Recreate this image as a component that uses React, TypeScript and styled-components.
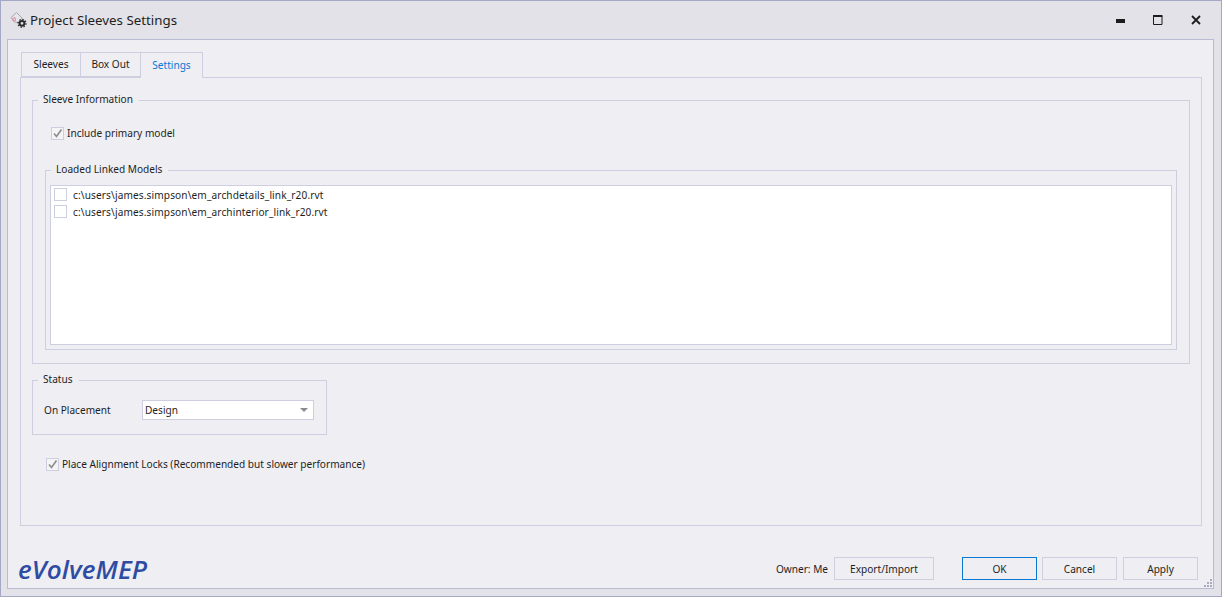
import React from 'react';
import styled, { createGlobalStyle } from 'styled-components';

const GlobalStyle = createGlobalStyle`
  html, body { margin: 0; padding: 0; }
  body { background: #e2e2e8; font-family: "Noto Sans", "DejaVu Sans", sans-serif; font-size: 10.1px; color: #1e1e1e; }
`;

const Window = styled.div`
  width: 1222px;
  height: 597px;
  box-sizing: border-box;
  border: 1px solid #a5a8c5;
  background: #e2e2e8;
  display: flex;
  flex-direction: column;
  overflow: hidden;
`;

const TitleBar = styled.div`
  height: 38px;
  flex: none;
  display: flex;
  align-items: center;
  padding: 0 6px 0 9px;
`;

const TitleText = styled.span`
  font-size: 13.3px;
  margin-left: 2px;
  flex: 1;
`;

const WinButton = styled.div`
  width: 38px;
  height: 38px;
  display: flex;
  align-items: center;
  justify-content: center;
  margin-top: -1px;
`;

const Body = styled.div`
  flex: 1;
  margin: 0 7px 7px 6px;
  border: 1px solid #b9bbd2;
  background: #eeeef3;
  padding: 12px 11px 0 12px;
  display: flex;
  flex-direction: column;
  position: relative;
`;

const TabRow = styled.div`
  display: flex;
  padding-left: 1px;
  height: 26px;
  position: relative;
  z-index: 1;
`;

const Tab = styled.div<{ $w: number; $active?: boolean }>`
  width: ${p => p.$w}px;
  height: 25px;
  box-sizing: border-box;
  padding-bottom: 2px;
  display: flex;
  align-items: center;
  justify-content: center;
  border: 1px solid #cdcfe0;
  margin-right: -1px;
  background: #eeeef3;
  color: ${p => (p.$active ? '#0a78d2' : '#1e1e1e')};
  ${p => p.$active && 'height: 26px; border-bottom: none;'}
`;

const TabPage = styled.div`
  height: 449px;
  margin-top: -1px;
  box-sizing: border-box;
  border: 1px solid #cdcfe0;
  padding: 14px 11px 0 11px;
`;

const Group = styled.fieldset<{ $w?: number; $h: number }>`
  margin: 0;
  padding: 0;
  border: 1px solid #cdcfe0;
  box-sizing: border-box;
  width: ${p => (p.$w ? `${p.$w}px` : 'auto')};
  height: ${p => p.$h}px;
`;

const Legend = styled.legend`
  margin-left: 5px;
  padding: 0 6px 2px 5px;
  line-height: 14px;
`;

const LinkedLegend = styled(Legend)`
  margin-left: 1px;
`;

const CheckRow = styled.div<{ $left: number; $top: number }>`
  display: flex;
  align-items: center;
  gap: 3px;
  margin-left: ${p => p.$left}px;
  margin-top: ${p => p.$top}px;
  height: 14px;
`;

const Box = styled.span`
  width: 13px;
  height: 13px;
  box-sizing: border-box;
  border: 1px solid #cdcfe0;
  background: #f4f4f7;
  display: inline-flex;
  align-items: center;
  justify-content: center;
`;

const ListBox = styled(Box)`
  background: #fff;
`;

const LinkedGroup = styled(Group)`
  margin: 22px 12px 0 12px;
  padding: 0 4px;
`;

const ModelList = styled.div`
  height: 160px;
  margin-top: 7px;
  background: #fff;
  border: 1px solid #cdcfe0;
  padding: 0 0 0 3px;
  box-sizing: border-box;
`;

const ModelRow = styled.div`
  height: 17px;
  display: flex;
  align-items: center;
  gap: 6px;
  letter-spacing: 0.12px;
`;

const StatusGroup = styled(Group)`
  margin-top: 8px;
`;

const StatusRow = styled.div`
  display: flex;
  align-items: center;
  margin-top: 12px;
  padding-left: 11px;
`;

const FieldLabel = styled.span`
  width: 98px;
`;

const Combo = styled.div`
  width: 172px;
  height: 20px;
  box-sizing: border-box;
  border: 1px solid #cdcfe0;
  background: #fff;
  display: flex;
  align-items: center;
  justify-content: space-between;
  padding: 0 5px 0 2px;
`;

const Caret = styled.span`
  width: 0;
  height: 0;
  border-left: 4px solid transparent;
  border-right: 4px solid transparent;
  border-top: 4px solid #8a8a92;
`;

const Footer = styled.div`
  display: flex;
  align-items: center;
  margin-top: 31px;
  padding-right: 4px;
  height: 23px;
`;

const Logo = styled.div`
  font-family: "Open Sans", sans-serif;
  font-style: italic;
  font-weight: 600;
  font-size: 26px;
  letter-spacing: 0.1px;
  color: #2f4ca3;
  margin-right: auto;
  margin-left: -2px;
`;

const Owner = styled.span`
  margin-right: 1px;
`;

const Button = styled.div<{ $w: number; $primary?: boolean }>`
  width: ${p => p.$w}px;
  height: 23px;
  box-sizing: border-box;
  display: flex;
  align-items: center;
  justify-content: center;
  border: 1px solid ${p => (p.$primary ? '#0a78d2' : '#cdcfe0')};
  margin-left: 5px;
  &:last-child {
    margin-left: 6px;
  }
`;

const Spacer = styled.span`
  width: 23px;
`;

const Grip = styled.svg`
  position: absolute;
  right: 0;
  bottom: 0;
`;

const Tick = () => (
  <svg width="11" height="11" viewBox="0 0 11 11">
    <path d="M2 5.5 L4.5 8.5 L9.5 1.5" fill="none" stroke="#8c8c8c" strokeWidth="1.6" />
  </svg>
);

const AppIcon = () => (
  <svg width="18" height="18" viewBox="0 0 18 18">
    <path d="M1 6.5 L6.5 1.5 L12 7 L9 12 L4.5 11 Z" fill="#e6e6ea" stroke="#a8a8ae" />
    <path d="M2.5 7.5 L5 6.5 L5.5 9.5 L3.5 10 Z" fill="none" stroke="#d98a96" />
    <circle cx="12" cy="12.3" r="2.4" fill="none" stroke="#2c2c2c" strokeWidth="2" />
    <circle cx="12" cy="12.3" r="4" fill="none" stroke="#2c2c2c" strokeWidth="1.2" strokeDasharray="1.5 1.6" />
  </svg>
);

const models = [
  'c:\\users\\james.simpson\\em_archdetails_link_r20.rvt',
  'c:\\users\\james.simpson\\em_archinterior_link_r20.rvt',
];

export default function App() {
  return (
    <Window>
      <GlobalStyle />
      <TitleBar>
        <AppIcon />
        <TitleText>Project Sleeves Settings</TitleText>
        <WinButton>
          <svg width="10" height="10" viewBox="0 0 10 10"><rect x="1" y="4" width="9" height="4" fill="#1c1c1c" /></svg>
        </WinButton>
        <WinButton>
          <svg width="10" height="10" viewBox="0 0 10 10"><path d="M.5 1.5h8.5v8h-8.5z" fill="none" stroke="#1c1c1c" /><rect x="0" y="0" width="9.5" height="2" fill="#1c1c1c" /></svg>
        </WinButton>
        <WinButton>
          <svg width="10" height="10" viewBox="0 0 10 10"><path d="M1 1l8 8M9 1l-8 8" stroke="#1c1c1c" strokeWidth="1.8" /></svg>
        </WinButton>
      </TitleBar>
      <Body>
        <TabRow>
          <Tab $w={60}>Sleeves</Tab>
          <Tab $w={61}>Box Out</Tab>
          <Tab $w={63} $active>Settings</Tab>
        </TabRow>
        <TabPage>
          <Group $h={272}>
            <Legend>Sleeve Information</Legend>
            <CheckRow $left={18} $top={18}>
              <Box><Tick /></Box>
              Include primary model
            </CheckRow>
            <LinkedGroup $h={188}>
              <LinkedLegend>Loaded Linked Models</LinkedLegend>
              <ModelList>
                {models.map(m => (
                  <ModelRow key={m}>
                    <ListBox />
                    {m}
                  </ModelRow>
                ))}
              </ModelList>
            </LinkedGroup>
          </Group>
          <StatusGroup $w={295} $h={63}>
            <Legend>Status</Legend>
            <StatusRow>
              <FieldLabel>On Placement</FieldLabel>
              <Combo>Design<Caret /></Combo>
            </StatusRow>
          </StatusGroup>
          <CheckRow $left={14} $top={22}>
            <Box><Tick /></Box>
            Place Alignment Locks (Recommended but slower performance)
          </CheckRow>
        </TabPage>
        <Footer>
          <Logo>eVolveMEP</Logo>
          <Owner>Owner: Me</Owner>
          <Button $w={100}>Export/Import</Button>
          <Spacer />
          <Button $w={75} $primary>OK</Button>
          <Button $w={75}>Cancel</Button>
          <Button $w={75}>Apply</Button>
        </Footer>
        <Grip width="10" height="10" viewBox="0 0 10 10">
          <path d="M7 1h2v2h-2zM4 4h2v2h-2zM7 4h2v2h-2zM1 7h2v2h-2zM4 7h2v2h-2zM7 7h2v2h-2z" fill="#a9abbe" />
        </Grip>
      </Body>
    </Window>
  );
}
